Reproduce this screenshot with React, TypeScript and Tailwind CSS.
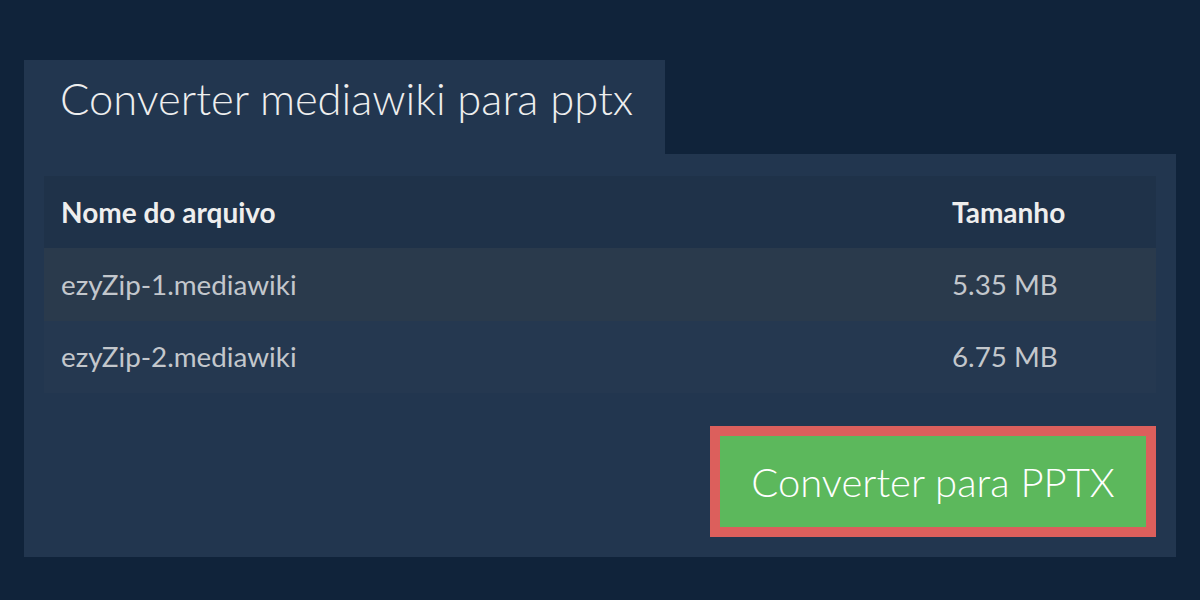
export default function App() {
  const files = [
    { name: 'ezyZip-1.mediawiki', size: '5.35 MB' },
    { name: 'ezyZip-2.mediawiki', size: '6.75 MB' },
  ]

  return (
    <div className="h-[600px] w-[1200px] bg-[#10233a] px-6 pt-[60px] font-['Lato',sans-serif]">
      <div className="flex h-[94px] w-[641px] items-center bg-[#22364f] pb-4 pl-9">
        <h1 className="text-[43.5px] font-light text-[#eeeeee]">
          Converter mediawiki para pptx
        </h1>
      </div>

      <div className="flex flex-col bg-[#22364f] p-5 pt-[22px]">
        <table className="w-full border-collapse text-left">
          <thead>
            <tr className="h-[72px] bg-[#1f3249]">
              <th className="pl-[17px] text-[28px] font-bold text-[#eeeeee]">
                Nome do arquivo
              </th>
              <th className="w-[221px] pl-[17px] text-[28px] font-bold text-[#eeeeee]">
                Tamanho
              </th>
            </tr>
          </thead>
          <tbody>
            {files.map((f, i) => (
              <tr
                key={f.name}
                className={i === 0 ? 'h-[73px] bg-[#2a3a4c]' : 'h-[72px] bg-[#253850]'}
              >
                <td className="pl-[17px] text-[27.8px] text-[#c3c7cc]">{f.name}</td>
                <td className="pl-[17px] text-[27.8px] text-[#c3c7cc]">{f.size}</td>
              </tr>
            ))}
          </tbody>
        </table>

        <div className="mt-[33px] flex justify-end">
          <button className="flex h-[111px] w-[446px] items-center justify-center border-[10px] border-[#dc5f5c] bg-[#5cb85c] text-[40px] font-light text-white">
            Converter para PPTX
          </button>
        </div>
      </div>
    </div>
  )
}
